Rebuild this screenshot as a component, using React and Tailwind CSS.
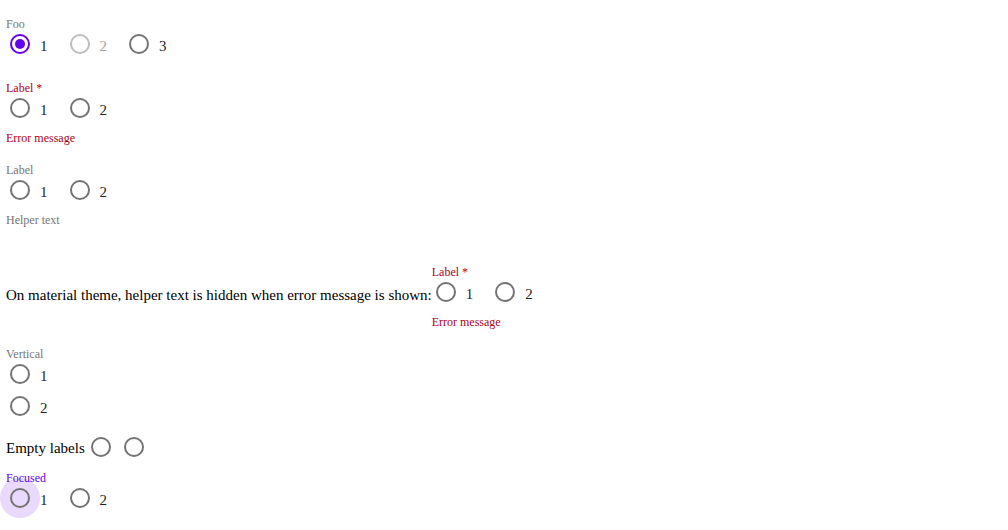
import React from "react";

const serif = { fontFamily: '"Liberation Serif", "Times New Roman", serif' };

function Radio({ label, checked, disabled, focused }) {
  let ring = "border-[#737373]";
  if (checked) ring = "border-[#6200ee]";
  if (disabled) ring = "border-[#bdbdbd]";
  return (
    <label className="flex items-center">
      <span className="relative mx-1 flex h-5 w-5 shrink-0 items-center justify-center">
        {focused && <span className="absolute inset-[-10px] rounded-full bg-[#6200ee]/15" />}
        <span className={`absolute inset-0 rounded-full border-2 ${ring}`} />
        {checked && <span className="relative h-[10px] w-[10px] rounded-full bg-[#6200ee]" />}
      </span>
      {label && (
        <span className={`pl-[6px] pr-[14px] pt-1 text-[15px] ${disabled ? "text-[#a3a3a3]" : "text-black/90"}`}>
          {label}
        </span>
      )}
    </label>
  );
}

function Group({ label, tone = "text-[#757575]", helper, helperTone = "text-[#757575]", vertical, children, className = "" }) {
  return (
    <div className={`flex flex-col ${className}`}>
      {label && <div className={`text-xs leading-[14px] ${tone}`}>{label}</div>}
      <div className={vertical ? "flex flex-col gap-[6px]" : "flex gap-1"}>{children}</div>
      {helper && <div className={`mt-[10px] text-xs leading-[14px] ${helperTone}`}>{helper}</div>}
    </div>
  );
}

function Row({ children }) {
  return <div className="flex h-[26px] items-center">{children}</div>;
}

export default function App() {
  return (
    <div className="min-h-[530px] bg-white px-[6px] pt-[17px] text-black" style={serif}>
      {/* basic, with disabled item */}
      <Group label="Foo">
        <Row><Radio label="1" checked /></Row>
        <Row><Radio label="2" disabled /></Row>
        <Row><Radio label="3" /></Row>
      </Group>

      {/* required + error */}
      <Group className="mt-[24px]" label="Label *" tone="text-[#b00020]" helper="Error message" helperTone="text-[#b00020]">
        <Row><Radio label="1" /></Row>
        <Row><Radio label="2" /></Row>
      </Group>

      {/* helper */}
      <Group className="mt-[18px]" label="Label" helper="Helper text">
        <Row><Radio label="1" /></Row>
        <Row><Radio label="2" /></Row>
      </Group>

      {/* inline with text */}
      <div className="mt-[38px] flex items-start gap-0">
        <span className="mt-[14px] pt-[3px] text-[15px] leading-[26px]">
          On material theme, helper text is hidden when error message is shown:
        </span>
        <Group label="Label *" tone="text-[#b00020]" helper="Error message" helperTone="text-[#b00020]">
          <Row><Radio label="1" /></Row>
          <Row><Radio label="2" /></Row>
        </Group>
      </div>

      {/* vertical */}
      <Group className="mt-[18px]" label="Vertical" vertical>
        <Row><Radio label="1" /></Row>
        <Row><Radio label="2" /></Row>
      </Group>

      {/* empty labels */}
      <div className="mt-[15px] flex h-[26px] items-center gap-0.5">
        <span className="pt-[2px] text-[15px]">Empty labels</span>
        <div className="flex gap-[5px]">
          <Radio />
          <Radio />
        </div>
      </div>

      {/* focused */}
      <Group className="mt-[11px]" label="Focused" tone="text-[#6200ee]">
        <Row><Radio label="1" focused /></Row>
        <Row><Radio label="2" /></Row>
      </Group>
    </div>
  );
}
